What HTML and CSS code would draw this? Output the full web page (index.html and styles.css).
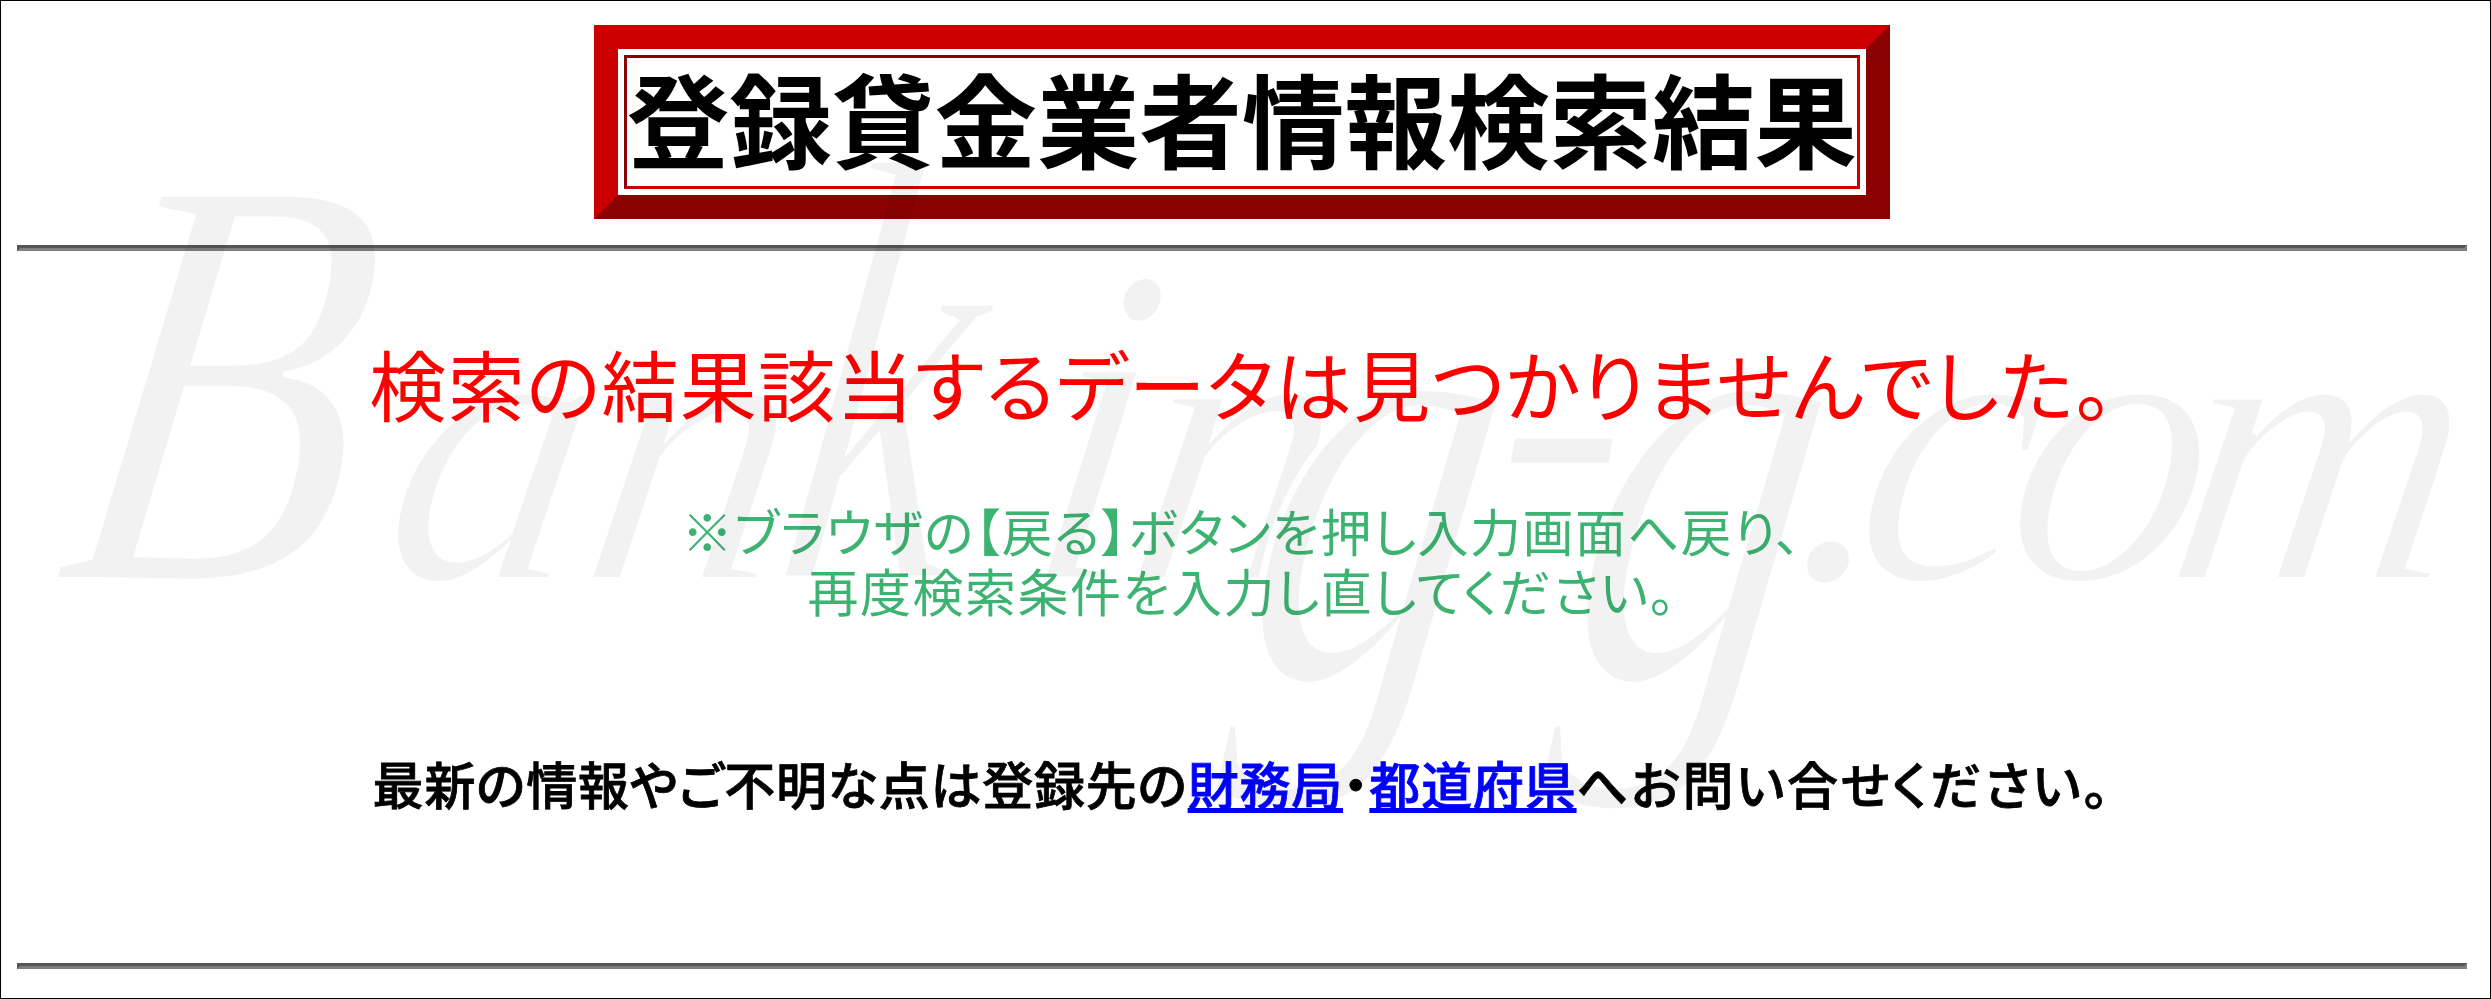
FILE: index.html
```html
<!DOCTYPE html>
<html lang="ja">
<head>
<meta charset="utf-8">
<title>登録貸金業者情報検索結果</title>
<link rel="stylesheet" href="styles.css">
</head>
<body>
<svg class="watermark" viewBox="0 0 2491 999" aria-hidden="true">
  <g class="wm-text">
    <text transform="translate(50 580) skewX(-9) scale(0.8 1)" font-size="590">B</text>
    <text transform="translate(375 580) skewX(-9)" font-size="400">a</text>
    <text transform="translate(575 580) skewX(-9)" font-size="400">n</text>
    <text transform="translate(770 580) skewX(-9) scale(1 1.52)" font-size="400">k</text>
    <text transform="translate(1020 580) skewX(-9) scale(1 1.15)" font-size="400">i</text>
    <text transform="translate(1120 580) skewX(-9)" font-size="400">n</text>
    <text transform="translate(1230 680) skewX(-9) scale(1.2 1.56)" font-size="400">g</text>
    <text transform="translate(1480 545) skewX(-9)" font-size="400">-</text>
    <text transform="translate(1555 680) skewX(-9) scale(1.2 1.56)" font-size="400">g</text>
    <text transform="translate(1785 580) skewX(-9)" font-size="400">.</text>
    <text transform="translate(1845 580) skewX(-9)" font-size="400">c</text>
    <text transform="translate(1995 580) skewX(-9)" font-size="400">o</text>
    <text transform="translate(2160 580) skewX(-9)" font-size="400">m</text>
  </g>
</svg>
<main class="page">
  <header class="title-wrap">
    <h1 class="title"><span class="title-inner">登録貸金業者情報検索結果</span></h1>
  </header>
  <hr class="rule rule-top">
  <section class="content">
    <p class="notfound">検索の結果該当するデータは見つかりませんでした。</p>
    <p class="hint">※ブラウザの【戻る】ボタンを押し入力画面へ戻り、<br>再度検索条件を入力し直してください。</p>
    <p class="contact">最新の情報やご不明な点は登録先の<a href="#">財務局</a>・<a href="#">都道府県</a><span class="contact-tail">へお問い合せください。</span></p>
  </section>
  <hr class="rule">
</main>
</body>
</html>
```
FILE: styles.css
```css
* { box-sizing: border-box; }
html, body { margin: 0; height: 100%; }
body {
  position: relative;
  width: 2491px;
  height: 999px;
  overflow: hidden;
  background: #fff;
  font-family: "Noto Sans CJK JP", "Noto Sans", sans-serif;
  color: #000;
}
.watermark { position: absolute; inset: 0; width: 2491px; height: 999px; z-index: 2; pointer-events: none; mix-blend-mode: multiply; }
.wm-text text { font-family: "Liberation Serif", serif; font-style: italic; fill: #f2f2f2; stroke: #fff; stroke-width: 6px; }
.page {
  width: 100%;
  height: 100%;
  border: 1px solid #000;
  padding: 24px 23px 0 16px;
  display: flex;
  flex-direction: column;
}
.title-wrap { display: flex; justify-content: center; }
.title {
  margin: 0;
  width: 1296px;
  height: 194px;
  border: 24px solid;
  border-color: #c00 #8b0000 #8b0000 #c00;
  background: #fff;
  padding: 6px;
}
.title-inner {
  display: flex;
  align-items: center;
  justify-content: center;
  height: 100%;
  padding-bottom: 10px;
  border: 3px solid;
  border-color: #8b0000 #c00 #c00 #8b0000;
  font-size: 102.5px;
  font-weight: 700;
  line-height: 1;
  white-space: nowrap;
}
.rule {
  margin: 0;
  height: 6px;
  border: 3px solid;
  border-color: #555 #808080 #808080 #555;
}
.rule-top { margin-top: 26px; }
.content {
  flex: 0 0 auto;
  height: 712px;
  text-align: center;
  font-feature-settings: "palt";
}
.notfound { margin: 77px 0 0; font-size: 77px; line-height: 110px; letter-spacing: 1.3px; color: #f00; }
.hint { margin: 62px 0 0; font-size: 51px; line-height: 60px; letter-spacing: 1.5px; color: #3cb371; }
.contact { margin: 128px 0 0; font-size: 51px; line-height: 70px; letter-spacing: 0.8px; font-weight: 500; -webkit-text-stroke: 0.8px currentColor; }
.contact a { color: #00f; }
.contact-tail { letter-spacing: 2.65px; }
```
